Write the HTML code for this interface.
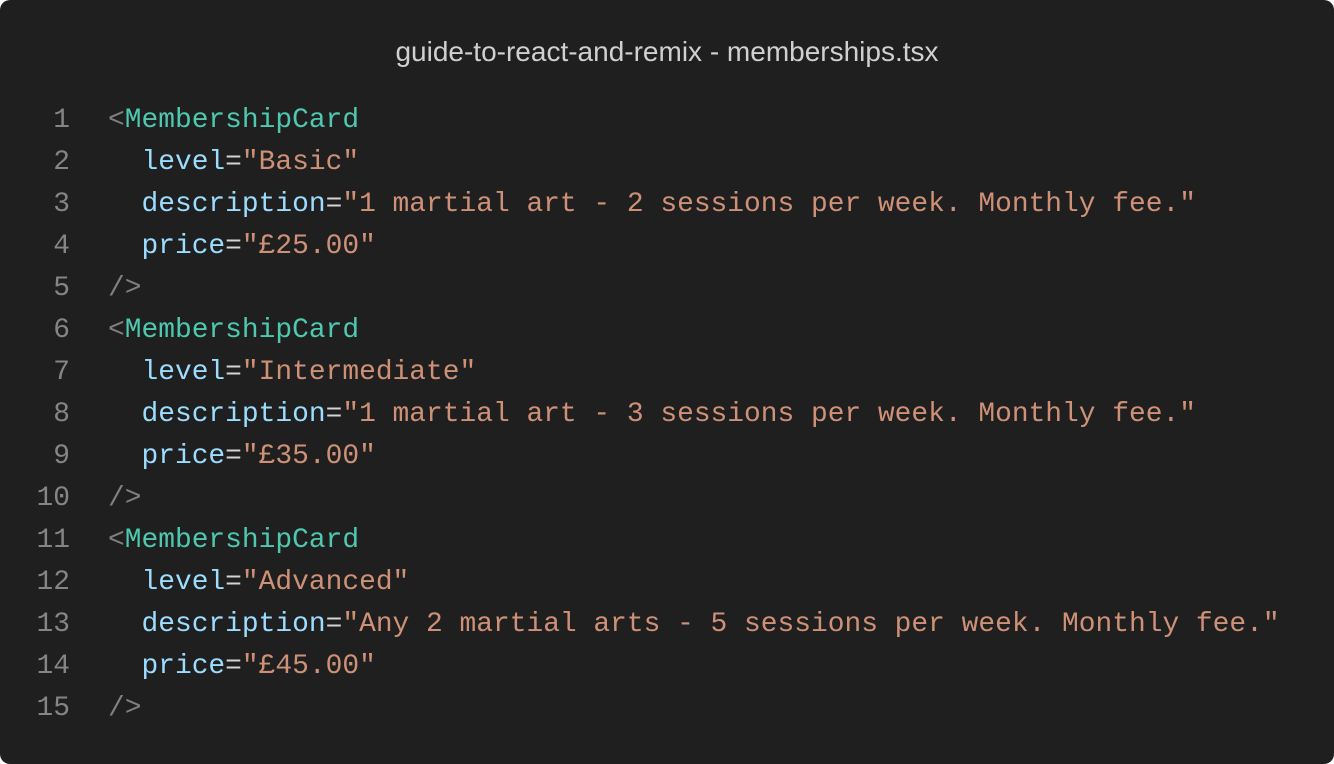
<!DOCTYPE html>
<html><head><style>
html,body{margin:0;padding:0;background:#fff;}
.w{width:1334px;height:764px;background:#1f1f1f;border-radius:10px;position:relative;overflow:hidden;}
.t{position:absolute;top:36px;left:0;width:1334px;text-align:center;color:#d0d0d0;font:28px/32px "Liberation Sans",sans-serif;}
.c{position:absolute;top:100px;left:0;font:27.9px/42px "Liberation Mono",monospace;white-space:pre;color:#d4d4d4;}
.n{display:inline-block;width:70px;text-align:right;color:#858585;margin-right:38px;}
.g{color:#808080}.k{color:#4ec9b0}.a{color:#9cdcfe}.s{color:#ce9178}
</style></head><body><div class="w">
<div class="t">guide-to-react-and-remix - memberships.tsx</div>
<div class="c"><div><span class="n">1</span><span class="g">&lt;</span><span class="k">MembershipCard</span></div><div><span class="n">2</span>  <span class="a">level</span>=<span class="s">"Basic"</span></div><div><span class="n">3</span>  <span class="a">description</span>=<span class="s">"1 martial art - 2 sessions per week. Monthly fee."</span></div><div><span class="n">4</span>  <span class="a">price</span>=<span class="s">"£25.00"</span></div><div><span class="n">5</span><span class="g">/&gt;</span></div><div><span class="n">6</span><span class="g">&lt;</span><span class="k">MembershipCard</span></div><div><span class="n">7</span>  <span class="a">level</span>=<span class="s">"Intermediate"</span></div><div><span class="n">8</span>  <span class="a">description</span>=<span class="s">"1 martial art - 3 sessions per week. Monthly fee."</span></div><div><span class="n">9</span>  <span class="a">price</span>=<span class="s">"£35.00"</span></div><div><span class="n">10</span><span class="g">/&gt;</span></div><div><span class="n">11</span><span class="g">&lt;</span><span class="k">MembershipCard</span></div><div><span class="n">12</span>  <span class="a">level</span>=<span class="s">"Advanced"</span></div><div><span class="n">13</span>  <span class="a">description</span>=<span class="s">"Any 2 martial arts - 5 sessions per week. Monthly fee."</span></div><div><span class="n">14</span>  <span class="a">price</span>=<span class="s">"£45.00"</span></div><div><span class="n">15</span><span class="g">/&gt;</span></div></div>
</div></body></html>
